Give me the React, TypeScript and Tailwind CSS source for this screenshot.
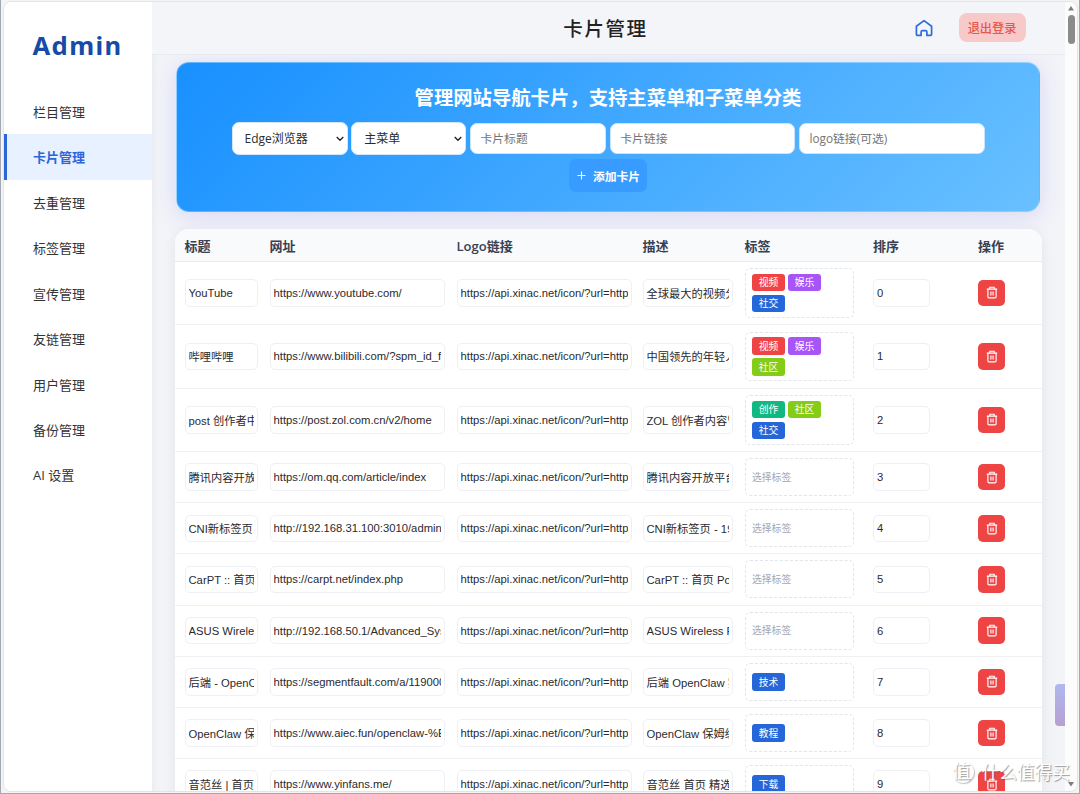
import React from 'react';
import clsx from 'clsx';

type Tag = { label: string; color: string };

type Card = {
  title: string;
  url: string;
  desc: string;
  tags: Tag[];
};

const LOGO_URL = 'https://api.xinac.net/icon/?url=http';

const menu = [
  '栏目管理',
  '卡片管理',
  '去重管理',
  '标签管理',
  '宣传管理',
  '友链管理',
  '用户管理',
  '备份管理',
  'AI 设置',
];

const video = { label: '视频', color: 'bg-[#ef4444]' };
const fun = { label: '娱乐', color: 'bg-[#a855f7]' };
const social = { label: '社交', color: 'bg-[#2566d8]' };
const community = { label: '社区', color: 'bg-[#84cc16]' };
const creation = { label: '创作', color: 'bg-[#10b981]' };
const tech = { label: '技术', color: 'bg-[#2566d8]' };
const tutorial = { label: '教程', color: 'bg-[#2566d8]' };
const download = { label: '下载', color: 'bg-[#2566d8]' };

const cards: Card[] = [
  { title: 'YouTube', url: 'https://www.youtube.com/', desc: '全球最大的视频分', tags: [video, fun, social] },
  { title: '哔哩哔哩', url: 'https://www.bilibili.com/?spm_id_f', desc: '中国领先的年轻人', tags: [video, fun, community] },
  { title: 'post 创作者中', url: 'https://post.zol.com.cn/v2/home', desc: 'ZOL 创作者内容管', tags: [creation, community, social] },
  { title: '腾讯内容开放', url: 'https://om.qq.com/article/index', desc: '腾讯内容开放平台', tags: [] },
  { title: 'CNI新标签页', url: 'http://192.168.31.100:3010/admin', desc: 'CNI新标签页 - 19', tags: [] },
  { title: 'CarPT :: 首页', url: 'https://carpt.net/index.php', desc: 'CarPT :: 首页 Po', tags: [] },
  { title: 'ASUS Wirele', url: 'http://192.168.50.1/Advanced_Sys', desc: 'ASUS Wireless R', tags: [] },
  { title: '后端 - OpenC', url: 'https://segmentfault.com/a/119000', desc: '后端 OpenClaw 实', tags: [tech] },
  { title: 'OpenClaw 保', url: 'https://www.aiec.fun/openclaw-%E', desc: 'OpenClaw 保姆级', tags: [tutorial] },
  { title: '音范丝 | 首页-', url: 'https://www.yinfans.me/', desc: '音范丝 首页 精选', tags: [download] },
];

const columns = ['标题', '网址', 'Logo链接', '描述', '标签', '排序', '操作'];

const gridCols = 'grid grid-cols-[85px_187px_186px_102px_128.5px_105px_1fr] pl-2.5';

const uiFont = 'font-["Open_Sans","Noto_Sans_CJK_SC",sans-serif]';
const inputFont = 'font-["Liberation_Sans","Noto_Sans_CJK_SC",sans-serif]';

const cjk = /[\u4e00-\u9fff]/;

function Field({ value, className }: { value: string; className: string }) {
  return (
    <div
      className={clsx(
        'flex h-[27.5px] items-center rounded-[5px] border border-[#eef0f6] bg-white px-[3px] text-[11.25px] text-[#2a2a2e]',
        inputFont,
        className
      )}
    >
      <span
        className={clsx(
          'block w-full overflow-hidden leading-[20px] whitespace-nowrap',
          cjk.test(value) && 'pt-[2px]'
        )}
      >
        {value}
      </span>
    </div>
  );
}

function TagBox({ tags }: { tags: Tag[] }) {
  return (
    <div
      className={clsx(
        'flex w-[109.5px] flex-wrap content-center items-center gap-x-[3px] gap-y-[3.5px] rounded-[5px] border border-dashed border-[#e3e5ea] px-[6.5px]',
        tags.length > 1 ? 'h-[49.5px]' : 'h-[38px]'
      )}
    >
      {tags.length === 0 && <span className="pt-[2px] text-[9.8px] text-[#a3a7b3]">选择标签</span>}
      {tags.map((tag) => (
        <span
          key={tag.label}
          className={clsx(
            'flex h-[17.5px] w-[33px] items-center justify-center rounded-[3px] pt-[1.5px] text-[9.8px] leading-none text-white',
            tag.color
          )}
        >
          {tag.label}
        </span>
      ))}
    </div>
  );
}

function TrashIcon() {
  return (
    <svg width="12" height="13" viewBox="0 0 12 13" fill="none" stroke="white" strokeWidth="1.15">
      <path d="M.8 3.1h10.4M3.8 3V1.2h4.4V3M1.9 3.2v7.6c0 .7.4 1.1 1.1 1.1h6c.7 0 1.1-.4 1.1-1.1V3.2M4.9 5.6v3.8M7.1 5.6v3.8" />
    </svg>
  );
}

function HomeIcon() {
  return (
    <svg width="18" height="18" viewBox="0 0 18 18" fill="none" stroke="#2f6bdc" strokeWidth="1.7" strokeLinejoin="round">
      <path d="M1.4 7.3 9 1.6l7.6 5.7v8c0 .7-.4 1.1-1.1 1.1h-3.6v-3.4c0-.9-.5-1.4-1.4-1.4h-3c-.9 0-1.4.5-1.4 1.4v3.4H2.5c-.7 0-1.1-.4-1.1-1.1z" />
    </svg>
  );
}

function Select({ value, className }: { value: string; className: string }) {
  return (
    <div
      className={clsx(
        'flex h-[33px] items-center justify-between rounded-[7px] border border-[#d3e6fb] bg-white pr-[3px] pl-3 text-[12px] text-[#2b2b2b]',
        className
      )}
    >
      <span>{value}</span>
      <svg width="8" height="6" viewBox="0 0 8 6" fill="none" stroke="#222" strokeWidth="1.3">
        <path d="M.7 1 4 4.3 7.3 1" />
      </svg>
    </div>
  );
}

function TextInput({ placeholder, className }: { placeholder: string; className: string }) {
  return (
    <div
      className={clsx(
        'flex h-[31.5px] items-center rounded-[7px] border border-[#cbe4fc] bg-white px-[9.5px] text-[11.8px] text-[#757575]',
        className
      )}
    >
      {placeholder}
    </div>
  );
}

function Sidebar() {
  return (
    <aside className="w-[148px] shrink-0 bg-white">
      <div className='flex h-[87px] items-center pt-[1px] pl-[28.5px] font-["Noto_Sans",sans-serif] text-[25.6px] font-bold tracking-[1.4px] text-[#164ba8]'>
        Admin
      </div>
      <nav>
        {menu.map((item) => (
          <div
            key={item}
            className={clsx(
              'flex h-[45.45px] items-center border-l-[3px] pt-[2px] pl-[26px] text-[13px]',
              item === '卡片管理'
                ? 'border-[#2c66d9] bg-[#e8f1ff] font-bold text-[#2c66d9]'
                : 'border-transparent text-[#333]'
            )}
          >
            {item}
          </div>
        ))}
      </nav>
    </aside>
  );
}

function Header() {
  return (
    <header className="relative flex h-[52.5px] items-center justify-end border-b border-[#e8eaf1] bg-[#f4f5f9] pr-[39.5px]">
      <h1 className="absolute inset-x-0 pt-[2px] pr-[6px] text-center text-[19.5px] font-medium tracking-[1.6px] text-[#222]">
        卡片管理
      </h1>
      <div className="mr-[26px]">
        <HomeIcon />
      </div>
      <button className="h-[29px] w-[67px] rounded-[8px] bg-[#f7c9c9] pt-[3px] text-[12.2px] font-medium text-[#e9564b]">
        退出登录
      </button>
    </header>
  );
}

function AddPanel() {
  return (
    <section className="ml-[24px] flex h-[150px] w-[864px] flex-col items-center rounded-[13px] border border-white/30 bg-linear-[135deg,#1890ff,#69c0ff] pt-[21px] shadow-[0_4px_24px_rgba(99,102,241,0.2)]">
      <h2 className="text-[19.35px] leading-[28px] font-bold text-white">
        管理网站导航卡片，支持主菜单和子菜单分类
      </h2>
      <div className="mt-[10px] flex items-center gap-[3.75px]">
        <Select value="Edge浏览器" className="w-[116px]" />
        <Select value="主菜单" className="w-[115px]" />
        <TextInput placeholder="卡片标题" className="w-[136px]" />
        <TextInput placeholder="卡片链接" className="w-[185.5px]" />
        <TextInput placeholder="logo链接(可选)" className="w-[185.5px]" />
      </div>
      <button className="mt-[4px] flex h-[33px] w-[78px] items-center justify-center gap-[7px] rounded-[7px] bg-[#389bff] pl-px text-[11.8px] font-bold text-white">
        <svg width="9" height="9" viewBox="0 0 9 9" stroke="white" strokeWidth="1.1">
          <path d="M4.5 .5v8M.5 4.5h8" />
        </svg>
        <span className="pt-[2px]">添加卡片</span>
      </button>
    </section>
  );
}

function CardTable() {
  return (
    <section className="mt-[17px] ml-[22.5px] w-[867.5px] overflow-hidden rounded-t-[14px] bg-white shadow-[0_2px_14px_rgba(0,0,0,0.07)]">
      <div
        className={clsx(
          gridCols,
          'h-[32.8px] items-center border-b border-[#e7eaef] bg-[#f9fafc] pt-[3px] text-[13px] font-bold text-[#374151]'
        )}
      >
        {columns.map((name) => (
          <div key={name} className={name === 'Logo链接' ? 'font-semibold' : ''}>
            {name}
          </div>
        ))}
      </div>
      {cards.map((card, i) => (
        <div
          key={card.url}
          className={clsx(
            gridCols,
            'items-center border-b border-[#eff0f2]',
            card.tags.length > 1 ? 'h-[63.4px]' : 'h-[51.2px]'
          )}
        >
          <Field value={card.title} className="w-[73.5px]" />
          <Field value={card.url} className="w-[175px]" />
          <Field value={LOGO_URL} className="w-[175px]" />
          <Field value={card.desc} className="w-[90.5px]" />
          <TagBox tags={card.tags} />
          <Field value={String(i)} className="w-[57px]" />
          <button className="flex h-[26.5px] w-[27px] items-center justify-center rounded-[5px] bg-[#ef4444]">
            <TrashIcon />
          </button>
        </div>
      ))}
    </section>
  );
}

function Scrollbar() {
  return (
    <div className="flex w-[12px] shrink-0 flex-col items-center bg-[#fcfcfc] pt-[4px] pb-[4px]">
      <svg width="6" height="5" viewBox="0 0 6 5" fill="#7d7d7d">
        <path d="M3 0 6 4.5H0z" />
      </svg>
      <div className="mt-[4px] h-[29px] w-[7px] rounded-full bg-[#8b8b8b]" />
      <svg className="mt-auto" width="6" height="5" viewBox="0 0 6 5" fill="#7d7d7d">
        <path d="M3 4.5 0 0h6z" />
      </svg>
    </div>
  );
}

function Watermark() {
  return (
    <div className="absolute right-[9px] bottom-[9px] flex items-center gap-[8px] text-[17.7px] text-white [text-shadow:1px_1px_1px_rgba(90,90,90,0.6)]">
      <span className="flex h-[22px] w-[22px] items-center justify-center rounded-full pr-[2px] pb-[2px] text-[18px] leading-none shadow-[1px_1px_1px_rgba(100,100,100,0.4)]">
        值
      </span>
      <span className="leading-[24px]">什么值得买</span>
    </div>
  );
}

export default function App() {
  return (
    <div
      className={clsx(
        'relative h-[794px] w-[1080px] overflow-hidden border-r border-b border-l border-[#a3a9b3] bg-[#f4f4f4] pt-px pr-px pb-px pl-[2px]',
        uiFont
      )}
    >
      <div className="flex h-[791px] overflow-hidden rounded-[8px] border border-[#e4e4e5] bg-[#f3f4f8]">
        <Sidebar />
        <div className="relative min-w-0 flex-1 overflow-hidden bg-[#f3f4f8] shadow-[inset_6px_0_8px_-6px_rgba(0,0,0,0.06)]">
          <Header />
          <main className="pt-[7.5px]">
            <AddPanel />
            <CardTable />
          </main>
          <div className="absolute right-0 bottom-[65px] h-[42px] w-[10px] rounded-l-[4px] bg-linear-to-b from-[#afb8f0] to-[#b6a0d0]" />
        </div>
        <Scrollbar />
      </div>
      <Watermark />
    </div>
  );
}
